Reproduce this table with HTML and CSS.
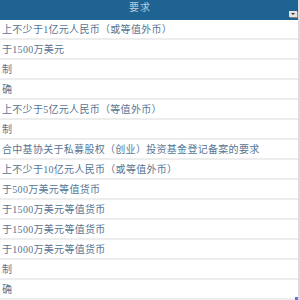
FILE: index.html
```html
<!DOCTYPE html>
<html lang="zh-CN">
<head>
    <meta charset="UTF-8">
    <meta name="viewport" content="width=device-width, initial-scale=1.0">
    <title>要求</title>
    <link rel="stylesheet" href="styles.css">
</head>
<body>
    <div class="grid">
        <div class="grid-head">
            <span class="head-title">要求</span>
            <span class="head-menu"></span>
        </div>
        <div class="grid-body">
            <div class="row">上不少于1亿元人民币（或等值外币）</div>
            <div class="row">于1500万美元</div>
            <div class="row">制</div>
            <div class="row">确</div>
            <div class="row">上不少于5亿元人民币（等值外币）</div>
            <div class="row">制</div>
            <div class="row">合中基协关于私募股权（创业）投资基金登记备案的要求</div>
            <div class="row">上不少于10亿元人民币（或等值外币）</div>
            <div class="row">于500万美元等值货币</div>
            <div class="row">于1500万美元等值货币</div>
            <div class="row">于1500万美元等值货币</div>
            <div class="row">于1000万美元等值货币</div>
            <div class="row">制</div>
            <div class="row">确</div>
        </div>
        <span class="resize-grip"></span>
    </div>
</body>
</html>
```
FILE: styles.css
```css
body {
    margin: 0;
    font-family: "Liberation Serif", "Noto Sans CJK SC", serif;
    background: #fff;
}
.grid {
    position: relative;
    width: 298px;
    height: 300px;
    overflow: hidden;
    border-right: 2px solid #dcdcdc;
}
.grid-head {
    display: flex;
    align-items: center;
    height: 20px;
    background: #1e6391;
    position: relative;
}
.head-title {
    width: 280px;
    text-align: center;
    font-size: 10px;
    line-height: 16px;
    color: #b9cde0;
    letter-spacing: 1px;
    padding-bottom: 4px;
}
.head-menu {
    position: absolute;
    right: 1px;
    top: 11px;
    width: 8px;
    height: 6px;
    background: #e4e4e4;
    box-shadow: 1px 1px 0 #8a8a8a;
}
.head-menu::after {
    content: "";
    position: absolute;
    left: 2px;
    top: 2px;
    border-left: 2px solid transparent;
    border-right: 2px solid transparent;
    border-top: 2px solid #333;
}
.row {
    height: 18px;
    line-height: 20px;
    border-bottom: 2px solid #ededed;
    padding-left: 2px;
    font-size: 10px;
    color: #577694;
    white-space: nowrap;
    overflow: hidden;
    letter-spacing: 0.3px;
}
.resize-grip {
    position: absolute;
    right: 0;
    bottom: 0;
    width: 3px;
    height: 3px;
    background: #5a78e0;
}
```
